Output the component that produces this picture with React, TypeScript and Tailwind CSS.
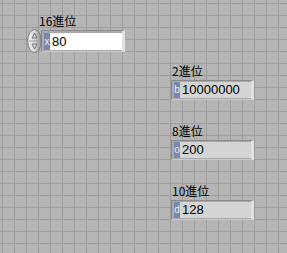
import React from "react";

const labelFont = "font-['Noto_Sans_CJK_JP','Liberation_Sans',sans-serif]";
const numFont = "font-['Liberation_Sans',Arial,sans-serif]";

function Indicator({ label, radix, value }: { label: string; radix: string; value: string }) {
  return (
    <div className="flex flex-col">
      <div className={`${labelFont} text-[12px] leading-[14px] text-black h-[16px] pl-[1px]`}>{label}</div>
      <div className="w-[83px] h-[20px] bg-[#a9a9a9] border-t border-l border-[#8a8a8a] border-r-[3px] border-r-[#e2e2e2] border-b border-b-[#c9c9c9] pl-[2px] pt-[1px] flex">
        <div className="w-[6px] h-[16px] bg-[#7b88ad] text-[#e8ecf8] text-[10px] leading-[15px] flex justify-center font-['Liberation_Sans',sans-serif]">{radix}</div>
        <div className={`flex-1 h-[16px] bg-[#d4d4d4] ${numFont} text-[13px] leading-[16px] text-black pl-[2px]`}>{value}</div>
      </div>
    </div>
  );
}

export default function App() {
  return (
    <div className="relative w-[287px] h-[253px] overflow-hidden bg-[#b5b5b5] bg-[linear-gradient(to_right,#9c9c9c_1px,transparent_1px),linear-gradient(to_bottom,#9c9c9c_1px,transparent_1px)] bg-[size:12px_12px] bg-[position:2px_3px]">
      {/* 16進位 control */}
      <div className="absolute left-[27px] top-[14px] flex flex-col">
        <div className={`pl-[12px] ${labelFont} text-[12px] leading-[14px] h-[16px] text-black`}>16進位</div>
        <div className="flex items-start">
          <svg className="-mt-[1px] -mr-[1px] relative z-10" width="15" height="24" viewBox="0 0 15 24">
            <defs>
              <linearGradient id="g" x1="0" x2="1" y1="0" y2="0">
                <stop offset="0" stopColor="#f4f4f4" />
                <stop offset="0.5" stopColor="#d8d8d8" />
                <stop offset="1" stopColor="#8c8c8c" />
              </linearGradient>
            </defs>
            <ellipse cx="7.5" cy="12" rx="6.8" ry="11.5" fill="url(#g)" stroke="#7a7a7a" strokeWidth="1" />
            <line x1="2" y1="12" x2="13" y2="12" stroke="#9a9a9a" strokeWidth="1" />
            <path d="M7.5 4 L10 9 L5 9 Z" fill="none" stroke="#6a6a6a" strokeWidth="0.9" />
            <path d="M7.5 20 L10 15 L5 15 Z" fill="none" stroke="#6a6a6a" strokeWidth="0.9" />
          </svg>
          <div className="w-[84px] h-[22px] bg-[#a9a9a9] border-t border-l border-[#8a8a8a] border-r-[3px] border-r-[#e2e2e2] border-b border-b-[#c9c9c9] pl-[2px] pt-[2px] flex">
            <div className="w-[6px] h-[17px] bg-[#7b88ad] text-[#e8ecf8] text-[10px] leading-[17px] flex justify-center font-['Liberation_Sans',sans-serif]">x</div>
            <div className={`flex-1 h-[17px] bg-white ${numFont} text-[13px] leading-[17px] text-black pl-[2px]`}>80</div>
          </div>
        </div>
      </div>

      <div className="absolute left-[171px] top-[64px] flex flex-col gap-[24px]">
        <Indicator label="2進位" radix="b" value="10000000" />
        <Indicator label="8進位" radix="o" value="200" />
        <Indicator label="10進位" radix="d" value="128" />
      </div>
    </div>
  );
}
